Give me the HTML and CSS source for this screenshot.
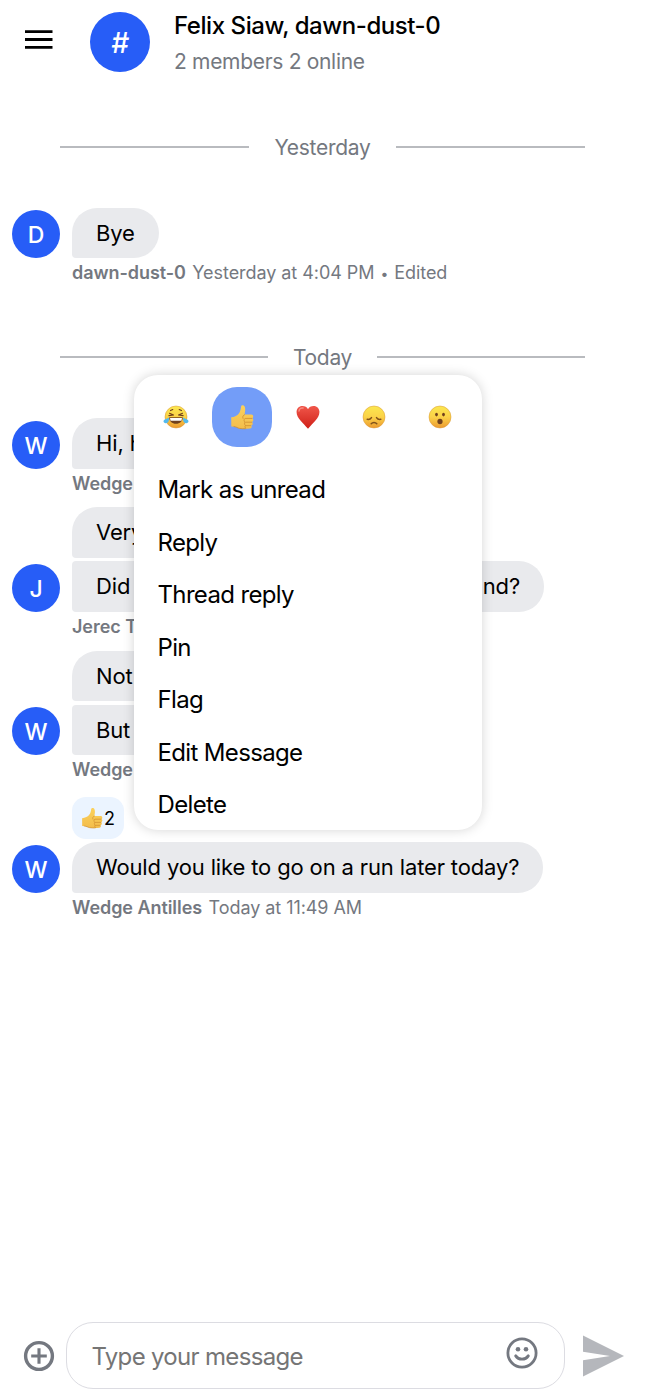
FILE: index.html
```html
<!DOCTYPE html>
<html lang="en">
<head>
<meta charset="utf-8">
<title>Chat</title>
<link rel="stylesheet" href="styles.css">
</head>
<body>
<svg class="defs" width="0" height="0">
  <defs>
    <linearGradient id="face" x1="0" y1="0" x2="0" y2="1"><stop offset="0" stop-color="#fbe84f"/><stop offset=".5" stop-color="#fbd248"/><stop offset="1" stop-color="#ec992f"/></linearGradient>
    <linearGradient id="skin" x1="0" y1="0" x2="0" y2="1"><stop offset="0" stop-color="#fbd15c"/><stop offset="1" stop-color="#f3bd4c"/></linearGradient>
    <linearGradient id="red" x1="0" y1="0" x2="0" y2="1"><stop offset="0" stop-color="#f0564a"/><stop offset="1" stop-color="#cf2018"/></linearGradient>
    <symbol id="thumb" viewBox="0 0 24 24">
      <path fill="url(#skin)" d="M1.200 12.300c3.300-.4 6.300-1.500 8.200-4.300 1-1.500 1.400-3.400 1.700-5.600.2-1.700 2.900-1.800 3.700.2.800 2.300.3 4.700-.3 7.200h6.900c2.200 0 2.400 3 .8 3.400 1.600.5 1.500 3-.2 3.500 1.200.7 1 2.900-.7 3.200.9 1 .3 2.700-1.300 2.800-3 .3-7.200.4-10.200-.1-2-.4-3.200-1.500-5.400-1.700l-3.100-.1z"/>
      <path fill="none" stroke="#d08f30" stroke-width=".8" stroke-linecap="round" d="M14.500 9.900c-1.500.5-2.200 1.800-1.500 3.400M15.600 13.300h6.200M15.700 16.800h5.900M15.800 20h4.800M14.800 13.500c-1 1-1 2.600.2 3.200-.7 1-.6 2.400.4 3.100-.7.900-.4 2.100.4 2.600M4 20.800c2.200.2 3.400 1.300 5.400 1.700 2 .3 4 .4 6 .3"/>
    </symbol>
  </defs>
</svg>
<div class="app">
  <header class="header">
    <svg class="menu-icon" width="28" height="20" viewBox="0 0 28 20"><path d="M0 1.700h27.500M0 9.500h27.500M0 17.300h27.500" stroke="#000" stroke-width="2.800"/></svg>
    <div class="avatar avatar-lg">#</div>
    <div class="heading">
      <div class="title">Felix Siaw, dawn-dust-0</div>
      <div class="subtitle">2 members 2 online</div>
    </div>
  </header>

  <main class="messages">
    <div class="divider"><span>Yesterday</span></div>
    <section class="group first">
      <div class="avatar">D</div>
      <div class="bubbles"><div class="bubble top">Bye</div></div>
      <div class="meta"><b>dawn-dust-0</b><span>Yesterday at 4:04 PM <i>•</i> Edited</span></div>
    </section>
    <div class="divider today"><span>Today</span></div>
    <section class="group">
      <div class="avatar">W</div>
      <div class="bubbles"><div class="bubble top medium">Hi, h</div></div>
      <div class="meta"><b>Wedge</b></div>
    </section>
    <section class="group">
      <div class="avatar">J</div>
      <div class="bubbles"><div class="bubble top medium">Very</div><div class="bubble wide"><span>Did</span><span>nd?</span></div></div>
      <div class="meta"><b>Jerec T</b></div>
    </section>
    <section class="group">
      <div class="avatar">W</div>
      <div class="bubbles"><div class="bubble top medium">Not</div><div class="bubble medium">But</div></div>
      <div class="meta"><b>Wedge</b></div>
      <div class="reaction"><svg width="22" height="22"><use href="#thumb"/></svg><span>2</span></div>
    </section>
    <section class="group">
      <div class="avatar">W</div>
      <div class="bubbles"><div class="bubble top">Would you like to go on a run later today?</div></div>
      <div class="meta"><b>Wedge Antilles</b><span>Today at 11:49 AM</span></div>
    </section>
  </main>

  <footer class="composer">
    <svg width="32" height="32" viewBox="0 0 32 32" fill="none" stroke="#747880"><circle cx="16" cy="16" r="13.400" stroke-width="3.400"/><path d="M8.200 16h15.600M16 8.200v15.600" stroke-width="3.100"/></svg>
    <div class="input">
      <span>Type your message</span>
      <svg width="32" height="32" viewBox="0 0 32 32" fill="none" stroke="#747880"><circle cx="16" cy="16" r="14.100" stroke-width="2.800"/><g fill="#747880" stroke="none"><circle cx="12" cy="12.200" r="2.300"/><circle cx="20" cy="12.200" r="2.300"/></g><path d="M9.700 18.900c2.900 4.300 9.700 4.300 12.600 0" stroke-width="2.900" stroke-linecap="round"/></svg>
    </div>
    <svg width="41" height="42" viewBox="0 0 41 42"><path fill="#b5b7bc" d="M0 .5 41 21 0 41.500V25.300L27 21 0 16.700z"/></svg>
  </footer>

  <div class="menu">
    <div class="picker">
      <div class="emoji"><svg width="26" height="24" viewBox="0 0 26 24"><circle cx="13" cy="12" r="11" fill="url(#face)" stroke="#d99634" stroke-width=".5"/><path d="M6.300 12.300h13.400c.2 4-2.800 6.500-6.700 6.500s-6.900-2.500-6.700-6.500z" fill="#70401d"/><path d="M7 13h12l-.5 2.700h-11z" fill="#fff"/><path d="M6.500 8.300l4 1.700-4.600.6M19.500 8.300l-4 1.700 4.600.6M7.500 5.600l2.300-1M18.500 5.600l-2.300-1" fill="none" stroke="#70401d" stroke-width="1.100" stroke-linecap="round" stroke-linejoin="round"/><path d="M5.800 12.500c.8 3.200-.7 5.700-3.100 5.700C.6 18.200-.3 15.900 1.400 14.700c1.100-.9 2.900-.8 4.400-2.200zM20.200 12.500c-.8 3.200.7 5.700 3.100 5.700 2.100 0 3-2.300 1.300-3.500-1.100-.9-2.900-.8-4.400-2.200z" fill="#54b9ed"/></svg></div>
      <div class="emoji selected"><svg width="24" height="26" viewBox="0 0 24 24" preserveAspectRatio="none"><use href="#thumb"/></svg></div>
      <div class="emoji"><svg width="24" height="24" viewBox="0 0 24 24"><path fill="url(#red)" d="M12 4.200C14-.4 22.700-.3 23.400 6.200 24 13 17 17.700 12 23.800 7 17.700 0 13 .6 6.200 1.300-.3 10-.4 12 4.200z"/><path d="M3 6c.3-2.200 2-3.500 4-3" stroke="#f98c82" stroke-width="1.500" fill="none" stroke-linecap="round"/></svg></div>
      <div class="emoji"><svg width="24" height="24" viewBox="0 0 24 24"><circle cx="12" cy="12" r="11" fill="url(#face)" stroke="#d99634" stroke-width=".5"/><path d="M5.200 14.300c1.700.4 3.300-.2 4.300-1.700M18.800 14.300c-1.700.4-3.300-.2-4.300-1.700M9.200 18.700c1.500-1.700 4.100-1.700 5.600 0" fill="none" stroke="#80521a" stroke-width="1.500" stroke-linecap="round"/></svg></div>
      <div class="emoji"><svg width="24" height="24" viewBox="0 0 24 24"><circle cx="12" cy="12" r="11" fill="url(#face)" stroke="#d99634" stroke-width=".5"/><g fill="#70401d"><ellipse cx="8.500" cy="9.600" rx="1.400" ry="1.800"/><ellipse cx="15.500" cy="9.600" rx="1.400" ry="1.800"/><ellipse cx="12" cy="16.500" rx="2.600" ry="2.700"/></g></svg></div>
    </div>
    <div class="actions">
      <div>Mark as unread</div><div>Reply</div><div>Thread reply</div><div>Pin</div><div>Flag</div><div>Edit Message</div><div>Delete</div>
    </div>
  </div>
</div>
</body>
</html>
```
FILE: styles.css
```css
* { box-sizing: border-box; }
body { margin: 0; background: #fff; color: #000; font-family: Inter, "Liberation Sans", sans-serif; }
.defs { position: absolute; }
svg { display: block; flex: none; }
.app { position: relative; height: 1396px; display: flex; flex-direction: column; overflow: hidden; }
.header { display: flex; align-items: flex-start; height: 120px; padding: 12px 0 0 25px; }
.menu-icon { margin-top: 18px; }
.avatar { width: 48px; height: 48px; border-radius: 50%; background: #275df7; color: #fff; font-size: 23px; font-weight: 500; line-height: 50px; text-align: center; }
.avatar-lg { width: 60px; height: 60px; margin-left: 37px; font-size: 28px; font-style: italic; line-height: 62px; }
.heading { margin-left: 24px; white-space: nowrap; }
.title { font-size: 24px; font-weight: 500; line-height: 28px; letter-spacing: -.44px; }
.subtitle { margin-top: 8px; font-size: 21px; line-height: 28px; letter-spacing: -.31px; color: #747880; }
.messages { flex: 1; }
.divider { display: flex; align-items: center; height: 54px; margin: 0 61px 0 60px; font-size: 21px; letter-spacing: -.28px; color: #747880; }
.divider span { margin: 1px 25px 0; }
.divider::before, .divider::after { content: ""; flex: 1; height: 1.500px; background: #b9bbbf; }
.today { margin-top: 42px; }
.group { display: grid; grid-template-columns: 48px 1fr; column-gap: 12px; padding-left: 12px; margin-bottom: 8.750px; }
.first { margin-top: 33.500px; }
.today + .group { margin-top: 34px; }
.group .avatar { align-self: end; }
.bubbles { display: flex; flex-direction: column; align-items: flex-start; gap: 3.500px; }
.bubble { height: 50.500px; padding: 0 24px; border-radius: 4px 25px 25px 4px; background: #e9eaed; font-size: 22px; line-height: 51px; letter-spacing: -.14px; white-space: nowrap; }
.bubble.top { border-top-left-radius: 25px; }
.medium { width: 300px; }
.wide { width: 472px; display: flex; justify-content: space-between; }
.meta { grid-column: 2; height: 30px; font-size: 18px; line-height: 30px; letter-spacing: -.06px; color: #747880; white-space: nowrap; }
.meta b { font-weight: 600; margin-right: 6.500px; }
.meta i { margin: 0 1px; font-style: normal; font-size: 14px; }
.reaction { grid-column: 2; width: 52px; height: 42px; margin: 12px 0 -5.500px; padding-left: 9px; display: flex; align-items: center; gap: 1px; border-radius: 14px; background: #ebf4ff; font-size: 18px; }
.composer { display: flex; align-items: center; height: 74px; padding: 0 22px 6px 23px; }
.input { display: flex; align-items: center; justify-content: space-between; width: 499px; height: 67px; margin: -1px 18px 0 11px; padding: 0 26px 0 24.500px; border: 1.500px solid #dcdce2; border-radius: 27px; font-size: 24px; letter-spacing: -.68px; color: #757575; }
.input span { margin-top: 1px; }
.input svg { margin-top: -5px; }
.menu { position: absolute; left: 133.500px; top: 375px; width: 348px; height: 454.500px; padding: 12px; border-radius: 24px; background: #fff; box-shadow: 0 0 12px rgba(0,0,0,.17); overflow: hidden; }
.picker { display: flex; gap: 6px; }
.emoji { width: 60px; height: 60px; border-radius: 25px; display: flex; align-items: center; justify-content: center; }
.selected { background: #739df8; }
.actions { padding: 17px 12px 0; font-size: 24px; letter-spacing: -.65px; }
.actions div { height: 52.500px; line-height: 52.500px; }
```
